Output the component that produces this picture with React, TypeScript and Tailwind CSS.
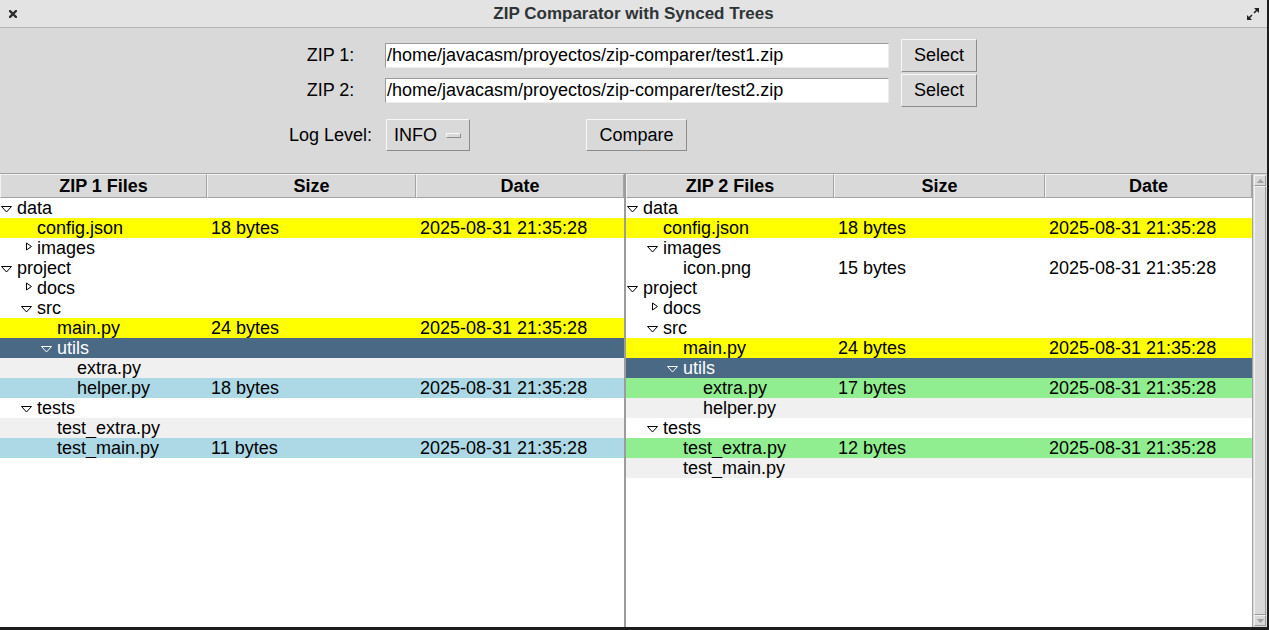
import React from 'react';

type Bg = 'w' | 'y' | 's' | 'g' | 'b' | 'gr';
type Row = {
  name: string;
  level: number;
  toggle?: 'open' | 'closed';
  size?: string;
  date?: string;
  bg: Bg;
};

const D = '2025-08-31 21:35:28';

const leftRows: Row[] = [
  { name: 'data', level: 0, toggle: 'open', bg: 'w' },
  { name: 'config.json', level: 1, size: '18 bytes', date: D, bg: 'y' },
  { name: 'images', level: 1, toggle: 'closed', bg: 'w' },
  { name: 'project', level: 0, toggle: 'open', bg: 'w' },
  { name: 'docs', level: 1, toggle: 'closed', bg: 'w' },
  { name: 'src', level: 1, toggle: 'open', bg: 'w' },
  { name: 'main.py', level: 2, size: '24 bytes', date: D, bg: 'y' },
  { name: 'utils', level: 2, toggle: 'open', bg: 's' },
  { name: 'extra.py', level: 3, bg: 'g' },
  { name: 'helper.py', level: 3, size: '18 bytes', date: D, bg: 'b' },
  { name: 'tests', level: 1, toggle: 'open', bg: 'w' },
  { name: 'test_extra.py', level: 2, bg: 'g' },
  { name: 'test_main.py', level: 2, size: '11 bytes', date: D, bg: 'b' },
];

const rightRows: Row[] = [
  { name: 'data', level: 0, toggle: 'open', bg: 'w' },
  { name: 'config.json', level: 1, size: '18 bytes', date: D, bg: 'y' },
  { name: 'images', level: 1, toggle: 'open', bg: 'w' },
  { name: 'icon.png', level: 2, size: '15 bytes', date: D, bg: 'w' },
  { name: 'project', level: 0, toggle: 'open', bg: 'w' },
  { name: 'docs', level: 1, toggle: 'closed', bg: 'w' },
  { name: 'src', level: 1, toggle: 'open', bg: 'w' },
  { name: 'main.py', level: 2, size: '24 bytes', date: D, bg: 'y' },
  { name: 'utils', level: 2, toggle: 'open', bg: 's' },
  { name: 'extra.py', level: 3, size: '17 bytes', date: D, bg: 'gr' },
  { name: 'helper.py', level: 3, bg: 'g' },
  { name: 'tests', level: 1, toggle: 'open', bg: 'w' },
  { name: 'test_extra.py', level: 2, size: '12 bytes', date: D, bg: 'gr' },
  { name: 'test_main.py', level: 2, bg: 'g' },
];

const bgMap: Record<Bg, string> = {
  w: 'bg-white text-black',
  y: 'bg-[#ffff00] text-black',
  s: 'bg-[#4a6984] text-white',
  g: 'bg-[#f0f0f0] text-black',
  b: 'bg-[#add8e6] text-black',
  gr: 'bg-[#90ee90] text-black',
};

const indent = ['pl-0', 'pl-[20px]', 'pl-[40px]', 'pl-[60px]'];

const btn =
  'bg-[#d9d9d9] border border-t-[#f7f7f7] border-l-[#f7f7f7] border-b-[#8c8c8c] border-r-[#8c8c8c] flex items-center justify-center';

const headCell =
  'h-[24px] bg-[#d9d9d9] border border-t-[#f2f2f2] border-l-[#f2f2f2] border-b-[#a3a3a3] border-r-[#a3a3a3] flex items-center justify-center font-bold';

function Toggle({ kind }: { kind: 'open' | 'closed' }) {
  return (
    <svg width="12" height="12" viewBox="0 0 12 12" className="ml-[1px] shrink-0">
      {kind === 'open' ? (
        <polygon points="0.5,4.5 10.5,4.5 5.5,10" fill="none" stroke="currentColor" strokeWidth="1" />
      ) : (
        <polygon points="5.5,1 10.5,4.5 5.5,8" fill="none" stroke="currentColor" strokeWidth="1" />
      )}
    </svg>
  );
}

function Tree({
  rows,
  title,
  width,
  cols,
}: {
  rows: Row[];
  title: string;
  width: string;
  cols: [string, string, string];
}) {
  return (
    <div className={`${width} shrink-0 h-full bg-white flex flex-col overflow-hidden`}>
      <div className="flex shrink-0">
        <div className={`${cols[0]} ${headCell}`}>{title}</div>
        <div className={`${cols[1]} ${headCell}`}>Size</div>
        <div className={`${cols[2]} ${headCell}`}>Date</div>
      </div>
      <div className="flex flex-col">
        {rows.map((r, i) => (
          <div
            key={i}
            className={`relative flex h-[20px] leading-[20px] whitespace-nowrap ${bgMap[r.bg]}`}
          >
            <div className={`${cols[0]} shrink-0 flex items-center overflow-hidden ${indent[r.level]}`}>
              <span className="w-[17px] h-[20px] shrink-0 flex items-center">
                {r.toggle ? <Toggle kind={r.toggle} /> : null}
              </span>
              <span>{r.name}</span>
            </div>
            <div className={`${cols[1]} shrink-0 px-[4px] overflow-hidden`}>{r.size}</div>
            <div className={`${cols[2]} shrink-0 px-[4px] overflow-hidden`}>{r.date}</div>
          </div>
        ))}
      </div>
    </div>
  );
}

function Scrollbar() {
  const part =
    'bg-[#d9d9d9] border border-t-[#f2f2f2] border-l-[#f2f2f2] border-b-[#9a9a9a] border-r-[#9a9a9a]';
  return (
    <div className="w-[15px] shrink-0 h-full bg-[#d9d9d9] border-l border-[#a3a3a3] flex flex-col p-[1px]">
      <div className={`h-[11px] shrink-0 flex items-center justify-center ${part}`}>
        <svg width="7" height="4" viewBox="0 0 7 4">
          <polygon points="0,4 7,4 3.5,0" fill="#a0a0a0" />
        </svg>
      </div>
      <div className={`flex-1 ${part}`} />
      <div className={`h-[11px] shrink-0 flex items-center justify-center ${part}`}>
        <svg width="7" height="4" viewBox="0 0 7 4">
          <polygon points="0,0 7,0 3.5,4" fill="#a0a0a0" />
        </svg>
      </div>
    </div>
  );
}

export default function App() {
  return (
    <div className="w-[1269px] h-[630px] flex flex-col bg-[#d9d9d9] font-['Liberation_Sans',Arial,sans-serif] text-[18px] text-black overflow-hidden border-r-2 border-b-[3px] border-[#1c1c1c]">
      {/* Title bar */}
      <div className="h-[28px] shrink-0 grid grid-cols-[40px_1fr_40px] items-center bg-[#e3e3e3] border-b border-[#b6b6b6]">
        <div className="pl-[9px] flex items-center">
          <svg width="8" height="8" viewBox="0 0 8 8">
            <path d="M1 1 L7 7 M7 1 L1 7" stroke="#2e2e2e" strokeWidth="2.4" strokeLinecap="square" />
          </svg>
        </div>
        <div className="text-center font-bold text-[17px] text-[#2e3436] leading-none">
          ZIP Comparator with Synced Trees
        </div>
        <div className="flex justify-end pr-[8px]">
          <svg width="12" height="12" viewBox="0 0 12 12">
            <polygon points="7,0 12,0 12,5" fill="#222" />
            <path d="M10.5 1.5 L7 5" stroke="#222" strokeWidth="1.6" />
            <polygon points="0,7 0,12 5,12" fill="#222" />
            <path d="M1.5 10.5 L5 7" stroke="#222" strokeWidth="1.6" />
          </svg>
        </div>
      </div>

      {/* Controls */}
      <div className="h-[145px] shrink-0 pt-[11px] pl-[284px] flex flex-col">
        <div className="flex items-center h-[33px]">
          <div className="w-[93px] text-center">ZIP 1:</div>
          <div className="ml-[8px] w-[504px] h-[25px] bg-white border border-t-[#9a9a9a] border-l-[#9a9a9a] border-b-[#ececec] border-r-[#ececec] pl-[1px] leading-[23px] whitespace-nowrap overflow-hidden">
            /home/javacasm/proyectos/zip-comparer/test1.zip
          </div>
          <div className={`ml-[12px] w-[76px] h-[33px] ${btn}`}>Select</div>
        </div>
        <div className="flex items-center h-[33px] mt-[2px]">
          <div className="w-[93px] text-center">ZIP 2:</div>
          <div className="ml-[8px] w-[504px] h-[25px] bg-white border border-t-[#9a9a9a] border-l-[#9a9a9a] border-b-[#ececec] border-r-[#ececec] pl-[1px] leading-[23px] whitespace-nowrap overflow-hidden">
            /home/javacasm/proyectos/zip-comparer/test2.zip
          </div>
          <div className={`ml-[12px] w-[76px] h-[33px] ${btn}`}>Select</div>
        </div>
        <div className="flex items-center h-[32px] mt-[12px]">
          <div className="w-[93px] text-center">Log Level:</div>
          <div className={`ml-[9px] w-[84px] h-[32px] ${btn} !justify-start pl-[7px]`}>
            <span>INFO</span>
            <span className="ml-[9px] w-[15px] h-[5px] bg-[#d9d9d9] border border-t-[#f7f7f7] border-l-[#f7f7f7] border-b-[#8c8c8c] border-r-[#8c8c8c]" />
          </div>
          <div className={`ml-[116px] w-[101px] h-[32px] ${btn}`}>Compare</div>
        </div>
      </div>

      {/* Trees */}
      <div className="flex-1 min-h-0 flex border-t border-[#a3a3a3]">
        <Tree
          rows={leftRows}
          title="ZIP 1 Files"
          width="w-[624px]"
          cols={['w-[207px]', 'w-[209px]', 'w-[208px]']}
        />
        <div className="w-[2px] shrink-0 h-full bg-[#9c9c9c]" />
        <Tree
          rows={rightRows}
          title="ZIP 2 Files"
          width="w-[626px]"
          cols={['w-[208px]', 'w-[211px]', 'w-[207px]']}
        />
        <Scrollbar />
      </div>
    </div>
  );
}
